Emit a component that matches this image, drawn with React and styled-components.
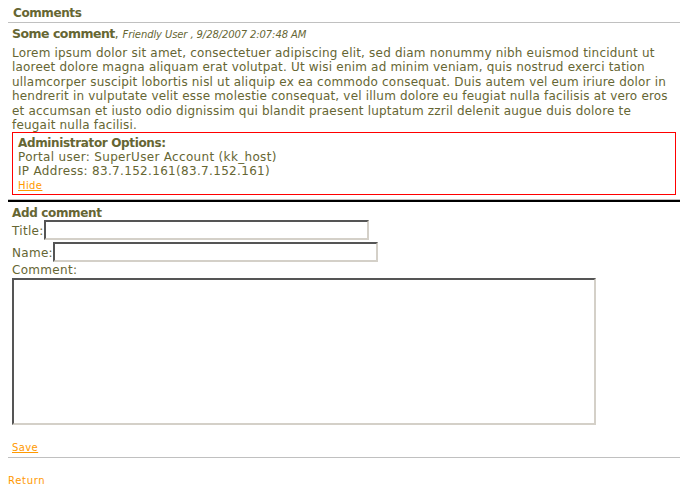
import React from 'react'
import styled, { createGlobalStyle } from 'styled-components'

const GlobalStyle = createGlobalStyle`
  body {
    margin: 4px 1px 8px 8px;
    background: #fff;
    font-family: "DejaVu Sans", Verdana, sans-serif;
    color: #666633;
  }
`

function App() {
  return (
    <>
      <GlobalStyle />
      <Page>
        <Heading>Comments</Heading>
        <Comment>
          <CommentHead>
            <CommentTitle>Some comment</CommentTitle>,{' '}
            <Meta>Friendly User , 9/28/2007 2:07:48 AM</Meta>
          </CommentHead>
          <Body>
            Lorem ipsum dolor sit amet, consectetuer adipiscing elit, sed diam nonummy nibh euismod tincidunt ut
            laoreet dolore magna aliquam erat volutpat. Ut wisi enim ad minim veniam, quis nostrud exerci tation
            ullamcorper suscipit lobortis nisl ut aliquip ex ea commodo consequat. Duis autem vel eum iriure dolor in
            hendrerit in vulputate velit esse molestie consequat, vel illum dolore eu feugiat nulla facilisis at vero eros
            et accumsan et iusto odio dignissim qui blandit praesent luptatum zzril delenit augue duis dolore te
            feugait nulla facilisi.
          </Body>
          <AdminBox>
            <AdminTitle>Administrator Options:</AdminTitle>
            <AdminLine>Portal user: SuperUser Account (kk_host)</AdminLine>
            <AdminLine>IP Address: 83.7.152.161(83.7.152.161)</AdminLine>
            <SmallLink href="#">Hide</SmallLink>
          </AdminBox>
        </Comment>
        <Divider />
        <Form>
          <FormTitle>Add comment</FormTitle>
          <Field>
            <Label>Title:</Label>
            <TextInput type="text" />
          </Field>
          <Field>
            <Label>Name:</Label>
            <TextInput type="text" />
          </Field>
          <Label>Comment:</Label>
          <TextArea />
          <SaveRow>
            <SmallLink href="#">Save</SmallLink>
          </SaveRow>
        </Form>
        <Footer>
          <ReturnLink href="#">Return</ReturnLink>
        </Footer>
      </Page>
    </>
  )
}

export default App

const Page = styled.div`
  width: 672px;
`
const Heading = styled.div`
  font-size: 12px;
  font-weight: bold;
  letter-spacing: -0.4px;
  padding: 2px 5px;
  border-bottom: 1px solid #c0c0c0;
  line-height: 14px;
`
const Comment = styled.div`
  padding: 3px 4px 4px;
`
const CommentHead = styled.div`
  height: 16px;
  font-size: 12px;
  line-height: 16px;
  white-space: nowrap;
`
const CommentTitle = styled.span`
  font-weight: bold;
  font-size: 12.5px;
  letter-spacing: -0.5px;
`
const Meta = styled.span`
  font-style: italic;
  font-size: 10px;
  letter-spacing: -0.1px;
`
const Body = styled.div`
  font-size: 12px;
  letter-spacing: 0.19px;
  line-height: 14.4px;
  margin-top: 4px;
`
const AdminBox = styled.div`
  border: 1px solid #ff0000;
  padding: 3px 5px 2px;
  font-size: 12px;
  line-height: 14px;
`
const AdminTitle = styled.div`
  font-weight: bold;
  letter-spacing: -0.35px;
`
const AdminLine = styled.div`
  letter-spacing: 0.32px;
`
const SmallLink = styled.a`
  display: inline-block;
  color: #ff9900;
  font-size: 10px;
  letter-spacing: 0.4px;
  line-height: 12px;
  text-decoration: underline;
`
const Divider = styled.div`
  border-top: 1px solid #c0c0c0;
  border-bottom: 2px solid #000;
`
const Form = styled.div`
  padding: 3px 4px 3px;
  font-size: 12px;
  line-height: 14px;
`
const FormTitle = styled.div`
  font-weight: bold;
  letter-spacing: -0.35px;
  padding-top: 1px;
`
const Field = styled.div`
  display: flex;
  align-items: center;
  & + & {
    margin-top: 2px;
  }
`
const Label = styled.div`
  line-height: 14px;
  letter-spacing: 0.3px;
  margin-top: 1px;
`
const TextInput = styled.input`
  box-sizing: border-box;
  width: 325px;
  height: 20px;
  margin: 0;
  padding: 0;
  border: 2px solid #d4d0c8;
  border-top-color: #555;
  border-left-color: #555;
  font-size: 12px;
  background: #fff;
`
const TextArea = styled.textarea`
  display: block;
  box-sizing: border-box;
  width: 584px;
  height: 147px;
  margin: 1px 0 0;
  padding: 0;
  border: 2px solid #d4d0c8;
  border-top-color: #555;
  border-left-color: #555;
  resize: none;
  background: #fff;
`
const SaveRow = styled.div`
  margin-top: 16px;
  line-height: 12px;
`
const Footer = styled.div`
  border-top: 1px solid #c0c0c0;
  padding-top: 15px;
  line-height: 12px;
`
const ReturnLink = styled.a`
  color: #ff9900;
  font-size: 10px;
  letter-spacing: 0.7px;
  text-decoration: none;
`
